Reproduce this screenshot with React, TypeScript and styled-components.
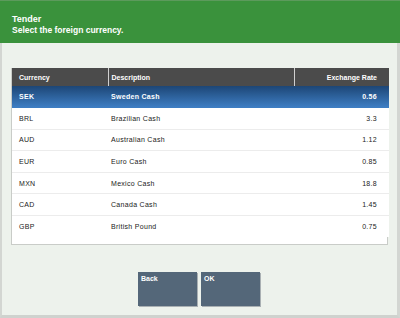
import React from 'react';
import styled, { createGlobalStyle } from 'styled-components';

const GlobalStyle = createGlobalStyle`
  html, body {
    margin: 0;
    padding: 0;
    background: #edf2ec;
  }
  body {
    font-family: "Liberation Sans", Arial, sans-serif;
  }
`;

const Screen = styled.div`
  width: 400px;
  height: 318px;
  display: flex;
  flex-direction: column;
  box-sizing: border-box;
  background: #edf2ec;
`;

const Header = styled.div`
  height: 43px;
  flex: none;
  box-sizing: border-box;
  background: #3a923c;
  border-top: 1px solid #5c9a5c;
  padding: 13px 0 0 12px;
  color: #fff;
  font-weight: bold;
`;

const Title = styled.div`
  font-size: 9px;
  line-height: 10px;
`;

const Prompt = styled.div`
  font-size: 8.5px;
  line-height: 10px;
  margin-top: 1px;
`;

const Body = styled.div`
  flex: 1;
  display: flex;
  flex-direction: column;
  box-sizing: border-box;
  border-left: 2px solid #d3d6d2;
  border-right: 3px solid #d3d6d2;
  border-bottom: 3px solid #cfd2ce;
  padding: 25px 10px 0 9px;
`;

const Panel = styled.div`
  width: 377px;
  height: 177px;
  box-sizing: border-box;
  background: #fff;
  border: 1px solid #c9ccc8;
  border-top: none;
`;

const Table = styled.table`
  width: 100%;
  border-collapse: collapse;
  table-layout: fixed;
  font-size: 7px;
`;

const Th = styled.th<{ $w: number; $right?: boolean; $pad: number }>`
  width: ${(p) => p.$w}px;
  height: 18px;
  box-sizing: border-box;
  background: #4b4b4b;
  color: #fff;
  font-weight: bold;
  text-align: ${(p) => (p.$right ? 'right' : 'left')};
  padding: 0 ${(p) => (p.$right ? '12px' : '0')} 0 ${(p) => p.$pad}px;
  border-left: 1px solid #d0d0d0;
  &:first-child {
    border-left: none;
  }
`;

const Row = styled.tr<{ $selected?: boolean }>`
  height: 21.6px;
  color: ${(p) => (p.$selected ? '#fff' : '#222')};
  font-weight: ${(p) => (p.$selected ? 'bold' : 'normal')};
  background: ${(p) =>
    p.$selected ? 'linear-gradient(to bottom, #1d4676, #3d7dc2)' : '#fff'};
  border-bottom: 1px solid ${(p) => (p.$selected ? '#3d7dc2' : '#ececec')};
  &:last-child {
    border-bottom: none;
  }
`;

const Td = styled.td<{ $right?: boolean; $pad: number }>`
  padding: 0 ${(p) => (p.$right ? '12px' : '0')} 0 ${(p) => p.$pad}px;
  text-align: ${(p) => (p.$right ? 'right' : 'left')};
  letter-spacing: 0.3px;
  white-space: nowrap;
`;

const Buttons = styled.div`
  display: flex;
  justify-content: center;
  gap: 4px;
  margin-top: 27px;
`;

const Button = styled.button`
  width: 59px;
  height: 34px;
  box-sizing: border-box;
  border: none;
  background: #546779;
  box-shadow: 1px 1px 0 #a9b0b3;
  color: #fff;
  font-family: "Liberation Sans", Arial, sans-serif;
  font-size: 7px;
  font-weight: bold;
  display: flex;
  align-items: flex-start;
  padding: 3px 0 0 3px;
  cursor: pointer;
`;

const currencies = [
  { code: 'SEK', name: 'Sweden Cash', rate: '0.56' },
  { code: 'BRL', name: 'Brazilian Cash', rate: '3.3' },
  { code: 'AUD', name: 'Australian Cash', rate: '1.12' },
  { code: 'EUR', name: 'Euro Cash', rate: '0.85' },
  { code: 'MXN', name: 'Mexico Cash', rate: '18.8' },
  { code: 'CAD', name: 'Canada Cash', rate: '1.45' },
  { code: 'GBP', name: 'British Pound', rate: '0.75' },
];

function App() {
  return (
    <Screen>
      <GlobalStyle />
      <Header>
        <Title>Tender</Title>
        <Prompt>Select the foreign currency.</Prompt>
      </Header>
      <Body>
        <Panel>
          <Table>
            <thead>
              <tr>
                <Th $w={96} $pad={7}>Currency</Th>
                <Th $w={186} $pad={3}>Description</Th>
                <Th $w={95} $pad={3} $right>Exchange Rate</Th>
              </tr>
            </thead>
            <tbody>
              {currencies.map((c, i) => (
                <Row key={c.code} $selected={i === 0}>
                  <Td $pad={7}>{c.code}</Td>
                  <Td $pad={3}>{c.name}</Td>
                  <Td $pad={3} $right>{c.rate}</Td>
                </Row>
              ))}
            </tbody>
          </Table>
        </Panel>
        <Buttons>
          <Button>Back</Button>
          <Button>OK</Button>
        </Buttons>
      </Body>
    </Screen>
  );
}

export default App;
